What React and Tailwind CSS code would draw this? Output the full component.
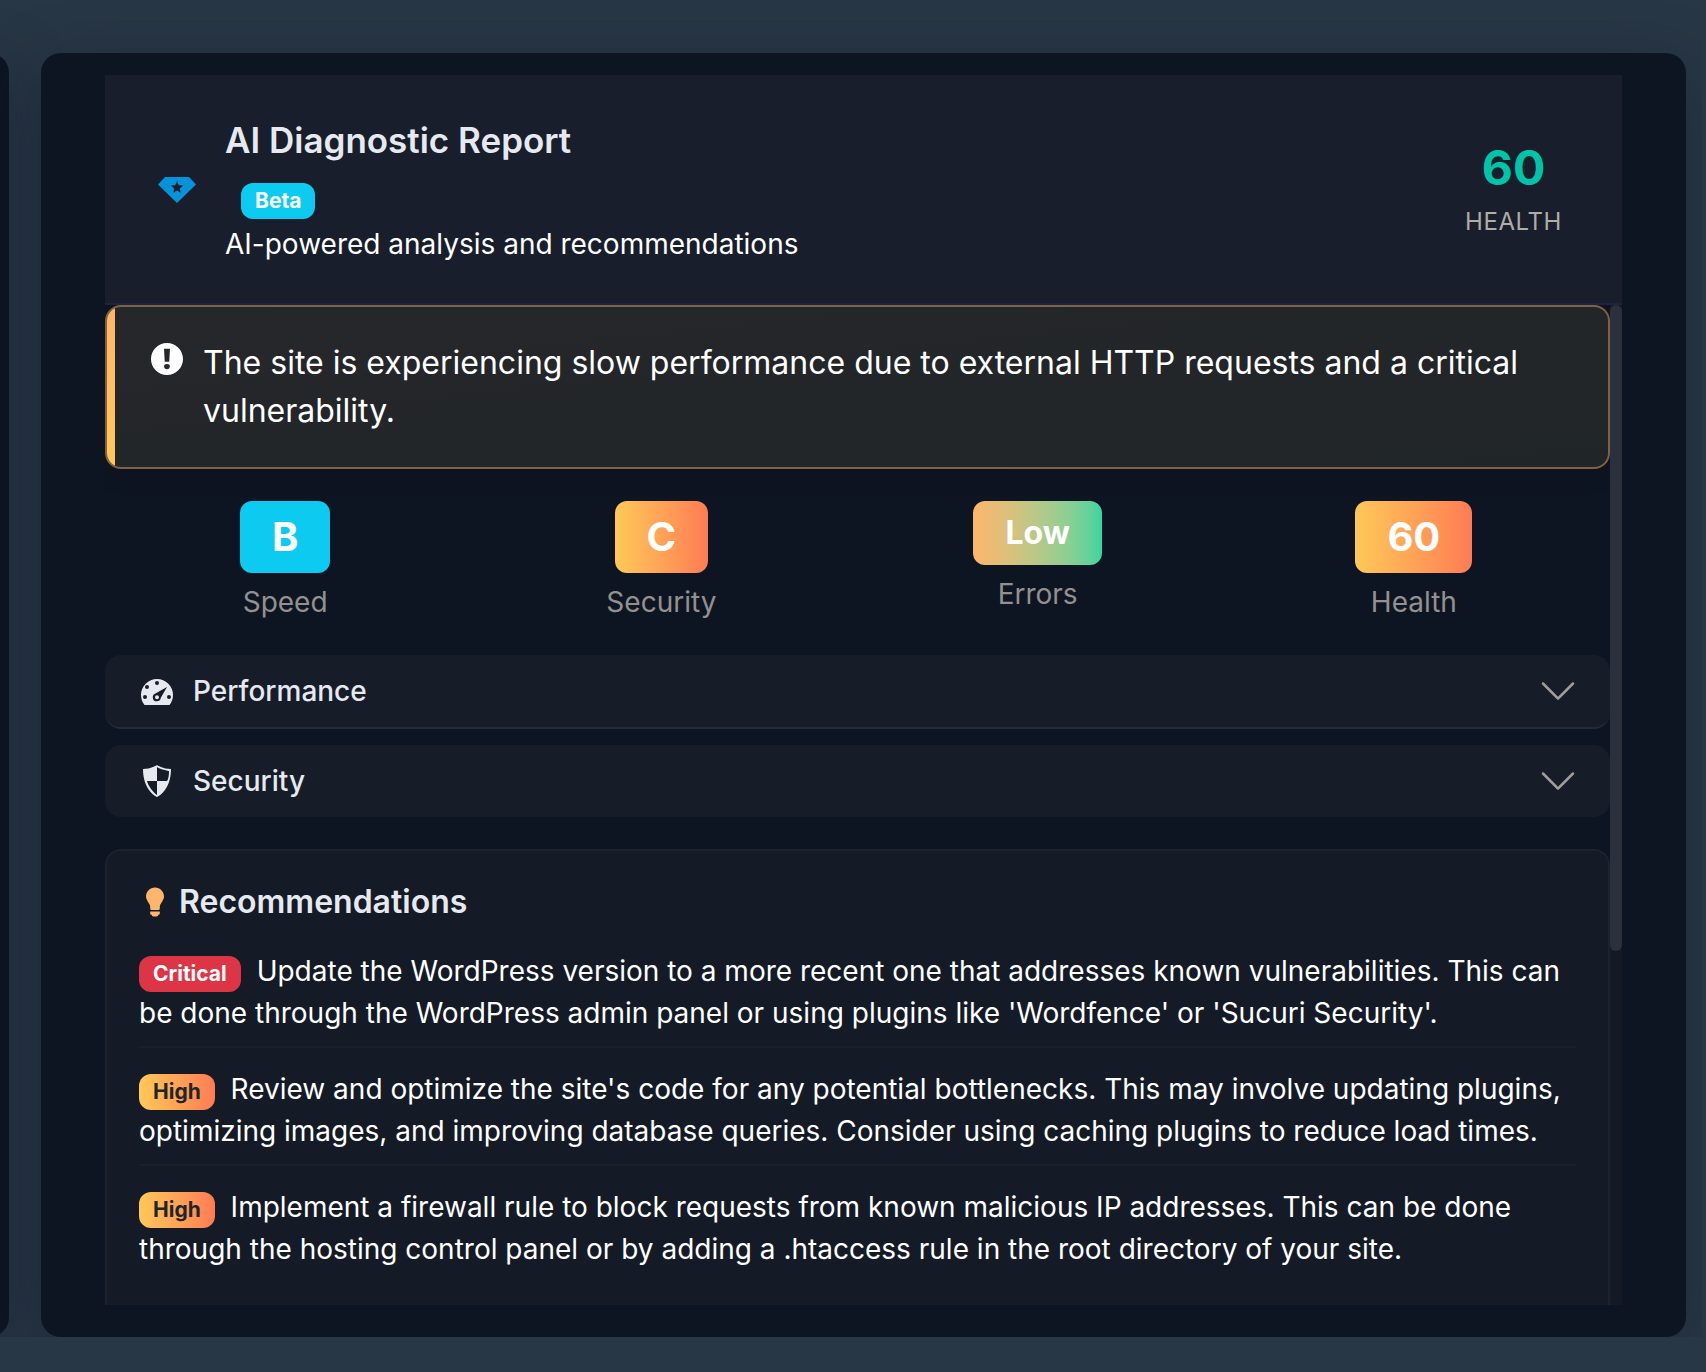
import React from 'react';

const WarningIcon = () => (
    <svg viewBox="0 0 20 20" className="size-10 shrink-0 fill-white" aria-hidden="true">
        <path d="M10 2c4.42 0 8 3.58 8 8s-3.58 8-8 8-8-3.58-8-8 3.58-8 8-8zm1.13 9.38l.35-6.46H8.52l.35 6.46h2.26zm-.09 3.36c.24-.23.37-.55.37-.96 0-.42-.12-.74-.36-.97s-.59-.35-1.06-.35-.82.12-1.07.35-.37.55-.37.97c0 .41.13.73.38.96.26.23.61.34 1.06.34s.8-.11 1.05-.34z" />
    </svg>
);

const GaugeIcon = () => (
    <svg viewBox="0 0 20 20" className="size-10 shrink-0 fill-current" aria-hidden="true">
        <path
            fillRule="evenodd"
            d="M3.76 17h12.48A7.95 7.95 0 0 0 18 12a8 8 0 0 0-16 0c0 1.9.66 3.65 1.76 5zM10 5a1 1 0 1 1 0 2 1 1 0 0 1 0-2zM5 7a1 1 0 1 1 0 2 1 1 0 0 1 0-2zM4 12a1 1 0 1 1 0 2 1 1 0 0 1 0-2zM16 12a1 1 0 1 1 0 2 1 1 0 0 1 0-2zM15 8l-3.1 5.4a2 2 0 1 1-2.7-2.1zM10 12.1a1 1 0 1 0 0 2 1 1 0 0 0 0-2z"
        />
    </svg>
);

const ShieldIcon = () => (
    <svg viewBox="0 0 20 20" className="size-10 shrink-0 fill-current" aria-hidden="true">
        <path d="M10 2s3 2 7 2c0 11-7 14-7 14S3 15 3 4c4 0 7-2 7-2zm0 8h5s1-1 1-5c0 0-5-1-6-2v7H5c1 4 5 7 5 7v-7z" />
    </svg>
);

const BulbIcon = () => (
    <svg viewBox="0 0 20 20" className="size-8 shrink-0 fill-[#ffb56b]" aria-hidden="true">
        <path d="M10 1c3.11 0 5.63 2.52 5.63 5.62 0 1.84-2.03 4.58-2.03 4.58-.33.44-.6 1.25-.6 1.8v1c0 .55-.45 1-1 1H8c-.55 0-1-.45-1-1v-1c0-.55-.27-1.36-.6-1.8 0 0-2.02-2.74-2.02-4.58C4.38 3.52 6.89 1 10 1zM7 16.87V16h6v.87c0 .62-.13 1.13-.75 1.13H12c0 .62-.4 1-1.02 1h-2c-.61 0-.98-.38-.98-1h-.25c-.62 0-.75-.51-.75-1.13z" />
    </svg>
);

const DiamondIcon = () => (
    <svg viewBox="0 0 38 26" className="h-[26px] w-[38px] shrink-0 fill-[#0693d9]" aria-hidden="true">
        <path
            fillRule="evenodd"
            d="M7 0h24l7 7.5L19 26 0 7.5zM19 4l-1.7 4.2-4.5.3 3.4 2.9-1 4.4 3.8-2.4 3.8 2.4-1-4.4 3.4-2.9-4.5-.3z"
        />
    </svg>
);

const ChevronIcon = () => (
    <svg viewBox="0 0 16 16" className="size-10 shrink-0 fill-[#a09d9a]" aria-hidden="true">
        <path d="M1.646 4.646a.5.5 0 0 1 .708 0L8 10.293l5.646-5.647a.5.5 0 0 1 .708.708l-6 6a.5.5 0 0 1-.708 0l-6-6a.5.5 0 0 1 0-.708z" />
    </svg>
);

const stats = [
    { value: 'B', label: 'Speed', style: 'bg-[#0dcaf0] text-[40px]' },
    { value: 'C', label: 'Security', style: 'bg-linear-to-r from-[#ffc857] to-[#ff7b54] text-[40px]' },
    { value: 'Low', label: 'Errors', style: 'bg-linear-to-r from-[#ffb56b] to-[#39d5a0] text-[32px]' },
    { value: '60', label: 'Health', style: 'bg-linear-to-r from-[#ffc857] to-[#ff7b54] text-[40px]' },
];

const sections = [
    { title: 'Performance', icon: <GaugeIcon />, style: 'border-b-2 border-[#252b36]' },
    { title: 'Security', icon: <ShieldIcon />, style: '' },
];

const highBadge = 'bg-linear-to-r from-[#ffc857] to-[#ff7b54] text-[#212529]';

const recommendations = [
    {
        level: 'Critical',
        badge: 'bg-[#dc3545] text-white',
        text: "Update the WordPress version to a more recent one that addresses known vulnerabilities. This can be done through the WordPress admin panel or using plugins like 'Wordfence' or 'Sucuri Security'.",
    },
    {
        level: 'High',
        badge: highBadge,
        text: "Review and optimize the site's code for any potential bottlenecks. This may involve updating plugins, optimizing images, and improving database queries. Consider using caching plugins to reduce load times.",
    },
    {
        level: 'High',
        badge: highBadge,
        text: 'Implement a firewall rule to block requests from known malicious IP addresses. This can be done through the hosting control panel or by adding a .htaccess rule in the root directory of your site.',
    },
];

const Badge = ({ className, children }) => (
    <span className={`inline-block rounded-xl px-3.5 py-[7px] text-[21px] leading-[22px] font-bold ${className}`}>
        {children}
    </span>
);

const ReportHeader = () => (
    <header className="flex items-center justify-between border-b-2 border-[#1e2440] bg-[#181e2b] pt-10 pr-[60px] pb-[38px] pl-[53px]">
        <div className="flex items-center gap-[29px]">
            <DiamondIcon />
            <div>
                <h1 className="text-[35px] leading-[50px] font-semibold text-[#e6e9ef]">AI Diagnostic Report</h1>
                <Badge className="mt-[18px] ml-4 bg-[#0dcaf0] text-white">Beta</Badge>
                <p className="mt-1 text-[28px] leading-[42px]">AI-powered analysis and recommendations</p>
            </div>
        </div>
        <div className="text-center">
            <div className="text-[48px] leading-[56px] font-bold text-[#00c4a7]">60</div>
            <div className="mt-2 text-2xl leading-9 tracking-wide text-[#b0aca6] uppercase">Health</div>
        </div>
    </header>
);

const App = () => {
    return (
        <div className="min-h-screen bg-[#283745] font-['Inter',sans-serif] text-white">
            <div className="mr-1 flex gap-8 overflow-hidden pt-[53px] pr-4">
                <div className="-ml-8 w-[41px] shrink-0 rounded-[20px] bg-[#0e1522] shadow-[0_16px_64px_rgba(13,18,40,0.35)]" />

                <main className="min-w-0 grow rounded-[20px] bg-[#0e1522] pt-[22px] pr-16 pb-8 pl-16 shadow-[0_16px_64px_rgba(13,18,40,0.35)]">
                    <ReportHeader />

                    <div className="flex h-[1000px] overflow-hidden">
                        <div className="min-w-0 grow">
                            <div className="flex overflow-hidden rounded-2xl border-2 border-[#7f6143] bg-linear-to-br from-[#26272b] to-[#202527] shadow-[0_4px_24px_rgba(0,0,0,0.15)]">
                                <div className="w-2 shrink-0 bg-linear-to-b from-[#ffb56b] to-[#ffc857]" />
                                <div className="flex gap-4 p-8">
                                    <WarningIcon />
                                    <p className="text-[32px] leading-[48px]">
                                        The site is experiencing slow performance due to external HTTP requests and a critical
                                        vulnerability.
                                    </p>
                                </div>
                            </div>

                            <div className="mt-8 mr-2 -ml-2 grid grid-cols-4">
                                {stats.map((stat) => (
                                    <div key={stat.label} className="text-center">
                                        <div className="flex justify-center">
                                            <span className={`rounded-xl px-8 py-4 leading-none font-bold ${stat.style}`}>
                                                {stat.value}
                                            </span>
                                        </div>
                                        <div className="mt-2 text-[28px] leading-[42px] text-[#939190]">{stat.label}</div>
                                    </div>
                                ))}
                            </div>

                            <div className="mt-8 flex flex-col gap-4">
                                {sections.map((section) => (
                                    <button
                                        key={section.title}
                                        type="button"
                                        aria-expanded="false"
                                        className={`flex items-center gap-4 rounded-2xl bg-[#161d28] px-8 py-4 text-[28px] leading-10 font-medium text-[#e6e9ef] ${section.style}`}
                                    >
                                        {section.icon}
                                        <span className="grow text-left">{section.title}</span>
                                        <ChevronIcon />
                                    </button>
                                ))}
                            </div>

                            <section className="mt-8 rounded-2xl border-2 border-[#1d232e] bg-[#141b26] px-8 pt-8 pb-16">
                                <h2 className="flex items-center gap-2 text-[32px] leading-[38px] font-semibold text-[#e6e9ef]">
                                    <BulbIcon />
                                    Recommendations
                                </h2>
                                <ul className="mt-[9px]">
                                    {recommendations.map((item, index) => (
                                        <li
                                            key={index}
                                            className="border-b-2 border-[#1a202b] pt-5 pb-3 text-[28px] leading-[42px] last:border-b-0"
                                        >
                                            <Badge className={`mr-2 ${item.badge}`}>{item.level}</Badge> {item.text}
                                        </li>
                                    ))}
                                </ul>
                            </section>
                        </div>

                        <div className="w-3 shrink-0 bg-[#141a25]">
                            <div className="h-[646px] rounded-full bg-[#2a303c]" />
                        </div>
                    </div>
                </main>
            </div>
        </div>
    );
};

export default App;
